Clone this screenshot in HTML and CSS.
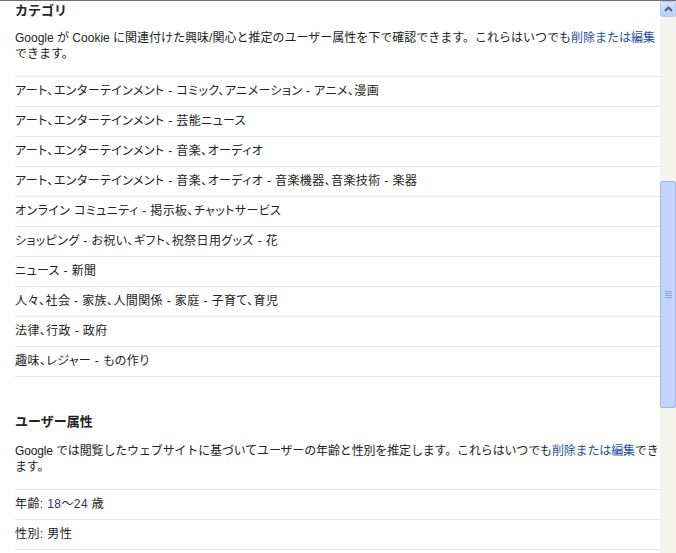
FILE: index.html
```html
<!DOCTYPE html>
<html lang="ja">
<head>
<meta charset="utf-8">
<link rel="stylesheet" href="styles.css">
</head>
<body>
<div class="frame">
  <div class="content">
    <section class="block">
      <h2 class="title">カテゴリ</h2>
      <p class="desc">Google が Cookie に関連付けた興味/関心と推定のユーザー属性を下で確認できます。これらはいつでも<a class="link" href="#">削除または編集</a>できます。</p>
      <ul class="list">
        <li class="row">アート、エンターテインメント - コミック、アニメーション - アニメ、漫画</li>
        <li class="row">アート、エンターテインメント - 芸能ニュース</li>
        <li class="row">アート、エンターテインメント - 音楽、オーディオ</li>
        <li class="row">アート、エンターテインメント - 音楽、オーディオ - 音楽機器、音楽技術 - 楽器</li>
        <li class="row">オンライン コミュニティ - 掲示板、チャットサービス</li>
        <li class="row">ショッピング - お祝い、ギフト、祝祭日用グッズ - 花</li>
        <li class="row">ニュース - 新聞</li>
        <li class="row">人々、社会 - 家族、人間関係 - 家庭 - 子育て、育児</li>
        <li class="row">法律、行政 - 政府</li>
        <li class="row">趣味、レジャー - もの作り</li>
      </ul>
    </section>
    <section class="block block-second">
      <h2 class="title">ユーザー属性</h2>
      <p class="desc desc-tight">Google では閲覧したウェブサイトに基づいてユーザーの年齢と性別を推定します。これらはいつでも<a class="link" href="#">削除または編集</a>できます。</p>
      <ul class="list">
        <li class="row">年齢: <span class="value">18〜24</span> 歳</li>
        <li class="row">性別: 男性</li>
      </ul>
    </section>
  </div>
  <div class="scrollbar">
    <div class="sb-btn">
      <svg width="9" height="6" viewBox="0 0 9 6"><path d="M1 5 L4.5 1.5 L8 5" fill="none" stroke="#4d6185" stroke-width="2"/></svg>
    </div>
    <div class="sb-track">
      <div class="sb-thumb">
        <span class="grip"></span>
      </div>
    </div>
  </div>
</div>
</body>
</html>
```
FILE: styles.css
```css
html, body {
  margin: 0;
  padding: 0;
  background: #ffffff;
}
body {
  width: 676px;
  height: 553px;
  overflow: hidden;
  font-family: Arial, "Liberation Sans", "Noto Sans CJK JP", sans-serif;
  font-size: 12px;
  color: #222222;
}
.frame {
  display: flex;
  height: 553px;
  border-top: 1px solid #6f6f6f;
  box-sizing: border-box;
}
.content {
  width: 645px;
  padding-left: 15px;
  overflow: hidden;
  flex: none;
}
.block { margin: 0; }
.block-second { margin-top: 35px; }
.title {
  margin: 0;
  font-size: 13px;
  font-weight: bold;
  line-height: 19px;
  color: #222222;
}
.desc {
  margin: 10px 0 14px 0;
  line-height: 16px;
  color: #222222;
}
.desc-tight {
  margin-top: 12px;
  letter-spacing: -0.15px;
}
.link {
  color: #1c4fa0;
  text-decoration: none;
}
.list {
  list-style: none;
  margin: 0;
  padding: 0;
  border-top: 1px solid #e5e5e5;
}
.row {
  height: 29px;
  line-height: 29px;
  border-bottom: 1px solid #e5e5e5;
  white-space: nowrap;
  font-feature-settings: "palt";
  letter-spacing: 0.4px;
}
.value { color: #3a2c6a; }
.scrollbar {
  width: 16px;
  flex: none;
  display: flex;
  flex-direction: column;
  background: #f4f3ee;
  margin-left: auto;
}
.sb-btn {
  height: 16px;
  width: 16px;
  box-sizing: border-box;
  border: 1px solid #b9c9ef;
  border-radius: 2px;
  background: linear-gradient(#d5e1fb, #bcd0f7);
  display: flex;
  align-items: center;
  justify-content: center;
}
.sb-track {
  flex: 1;
  padding-top: 164px;
}
.sb-thumb {
  height: 227px;
  width: 16px;
  box-sizing: border-box;
  border: 1px solid #a3b6e4;
  border-radius: 2px;
  background: #c3d4fb;
  display: flex;
  align-items: center;
  justify-content: center;
}
.grip {
  width: 7px;
  height: 7px;
  background: repeating-linear-gradient(#8fa6d8 0 1px, transparent 1px 2px);
}
```
